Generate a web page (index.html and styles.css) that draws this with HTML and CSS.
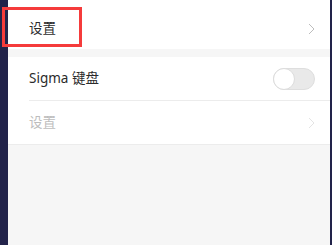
FILE: index.html
```html
<!DOCTYPE html>
<html>
<head>
<meta charset="utf-8">
<link rel="stylesheet" href="styles.css">
</head>
<body>
<div class="frame">
  <div class="side-left"></div>
  <div class="main">
    <div class="group">
      <div class="row row-first">
        <span class="label">设置</span>
        <svg class="chev" width="7" height="12" viewBox="0 0 7 12"><path d="M1 1 L6 6 L1 11" fill="none" stroke="#bdbdbd" stroke-width="1"/></svg>
      </div>
    </div>
    <div class="group group-second">
      <div class="row">
        <span class="label">Sigma 键盘</span>
        <span class="toggle"><span class="knob"></span></span>
      </div>
      <div class="sep"></div>
      <div class="row">
        <span class="label label-disabled">设置</span>
        <svg class="chev" width="7" height="12" viewBox="0 0 7 12"><path d="M1 1 L6 6 L1 11" fill="none" stroke="#e4e4e4" stroke-width="1"/></svg>
      </div>
    </div>
  </div>
  <div class="side-right"></div>
  <div class="highlight"></div>
</div>
</body>
</html>
```
FILE: styles.css
```css
html, body {
  margin: 0;
  padding: 0;
}
body {
  width: 332px;
  height: 245px;
  overflow: hidden;
  font-family: "Noto Sans", "Noto Sans CJK SC", sans-serif;
  background: #f6f6f6;
}
.frame {
  position: relative;
  display: flex;
  width: 332px;
  height: 245px;
}
.side-left {
  width: 8px;
  background: #22234a;
  flex-shrink: 0;
}
.side-right {
  width: 2px;
  background: #22234a;
  flex-shrink: 0;
}
.main {
  flex: 1;
  display: flex;
  flex-direction: column;
  background: #f6f6f6;
}
.group {
  background: #fff;
}
.group-second {
  margin-top: 8px;
  border-bottom: 1px solid #ececec;
}
.row {
  box-sizing: border-box;
  display: flex;
  align-items: center;
  justify-content: space-between;
  height: 43px;
  padding: 0 15px 0 21px;
}
.row-first {
  height: 49px;
  padding-top: 9px;
}
.label {
  font-size: 13.5px;
  color: #2b2b2b;
  line-height: 1;
}
.label-disabled {
  color: #bdbdbd;
}
.chev {
  display: block;
}
.sep {
  height: 1px;
  background: #ececec;
  margin-left: 21px;
}
.toggle {
  position: relative;
  width: 40px;
  height: 20px;
  border-radius: 11px;
  background: #e9e9e9;
  border: 1px solid #dedede;
  margin-right: 0;
}
.knob {
  position: absolute;
  left: -1px;
  top: -1px;
  width: 20px;
  height: 20px;
  border-radius: 50%;
  background: #fff;
  border: 1px solid #dcdcdc;
}
.highlight {
  position: absolute;
  left: 2px;
  top: 7px;
  width: 74px;
  height: 34px;
  border: 3px solid #f53b3b;
}
```
